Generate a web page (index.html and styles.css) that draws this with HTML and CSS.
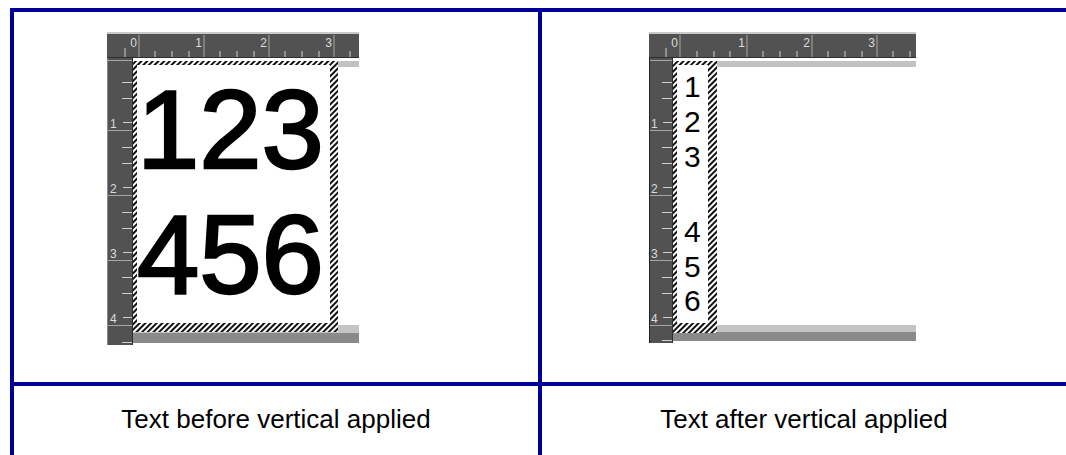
FILE: index.html
```html
<!DOCTYPE html>
<html lang="en">
<head>
    <meta charset="UTF-8">
    <title>Vertical Text</title>
    <link rel="stylesheet" href="styles.css">
</head>
<body>
    <div class="sheet">
        <div class="cell pic before">
            <svg class="shot" width="252" height="313" viewBox="0 0 252 313">
                <defs>
                    <pattern id="hatch-a" width="4" height="4" patternUnits="userSpaceOnUse" patternTransform="rotate(45)">
                        <rect width="4" height="4" fill="#fff"/>
                        <rect width="2" height="4" fill="#111"/>
                    </pattern>
                </defs>
                <rect width="252" height="313" fill="#fff"/>
                <rect x="26" y="29" width="226" height="6" fill="#c2c2c2"/>
                <rect x="26" y="293" width="226" height="8" fill="#c4c4c4"/>
                <rect x="26" y="301" width="226" height="10" fill="#8a8a8a"/>
                <!-- label -->
                <rect x="26" y="29" width="205" height="271" fill="url(#hatch-a)"/>
                <rect x="30" y="33" width="193" height="258" fill="#fff"/>
                <g class="digits big" font-size="112">
                    <text x="30" y="136">123</text>
                    <text x="30" y="261">456</text>
                </g>
                <!-- top ruler -->
                <rect width="252" height="26" fill="#525252"/>
                <rect width="252" height="2" fill="#cacaca"/>
                <rect y="25" width="252" height="1" fill="#2e2e2e"/>
                <path d="M32 3V25M97 3V25M162 3V25M227 3V25" stroke="#a6a6a6"/>
                <path d="M18 16V25M48 19V25M65 19V25M82 19V25M113 19V25M130 19V25M147 19V25M178 19V25M195 19V25M212 19V25M243 19V25" stroke="#cfcfcf"/>
                <g class="ruler-num" text-anchor="end">
                    <text x="30" y="15">0</text>
                    <text x="95" y="15">1</text>
                    <text x="160" y="15">2</text>
                    <text x="225" y="15">3</text>
                </g>
                <!-- left ruler -->
                <rect y="26" width="26" height="287" fill="#525252"/>
                <rect x="0" y="26" width="1" height="287" fill="#8a8a8a"/>
                <rect x="25" y="26" width="1" height="287" fill="#2e2e2e"/>
                <path d="M1 28.5H25M1 98.5H25M1 163.5H25M1 228.5H25M1 293.5H25" stroke="#a6a6a6"/>
                <path d="M15 50.5H25M15 66.5H25M16 90.5H25M15 115.5H25M15 131.5H25M16 155.5H25M15 180.5H25M15 196.5H25M16 220.5H25M15 245.5H25M15 261.5H25M16 285.5H25M15 310.5H25" stroke="#cfcfcf"/>
                <g class="ruler-num">
                    <text x="3" y="96">1</text>
                    <text x="3" y="161">2</text>
                    <text x="3" y="226">3</text>
                    <text x="3" y="291">4</text>
                </g>
            </svg>
        </div>
        <div class="cell pic after">
            <svg class="shot" width="267" height="311" viewBox="0 0 267 311">
                <defs>
                    <pattern id="hatch-b" width="4" height="4" patternUnits="userSpaceOnUse" patternTransform="rotate(45)">
                        <rect width="4" height="4" fill="#fff"/>
                        <rect width="2" height="4" fill="#111"/>
                    </pattern>
                </defs>
                <rect width="267" height="311" fill="#fff"/>
                <rect x="24" y="29" width="243" height="6" fill="#c2c2c2"/>
                <rect x="24" y="293" width="243" height="7" fill="#c4c4c4"/>
                <rect x="24" y="300" width="243" height="9" fill="#8a8a8a"/>
                <!-- label -->
                <rect x="24" y="29" width="44" height="272" fill="url(#hatch-b)"/>
                <rect x="28" y="33" width="31" height="258" fill="#fff"/>
                <g class="digits small" font-size="30">
                    <text x="35" y="65">1</text>
                    <text x="35" y="100">2</text>
                    <text x="35" y="135">3</text>
                    <text x="35" y="210">4</text>
                    <text x="35" y="245">5</text>
                    <text x="35" y="279">6</text>
                </g>
                <!-- top ruler -->
                <rect width="267" height="26" fill="#525252"/>
                <rect width="267" height="2" fill="#cacaca"/>
                <rect y="25" width="267" height="1" fill="#2e2e2e"/>
                <path d="M31 3V25M98 3V25M163 3V25M228 3V25" stroke="#a6a6a6"/>
                <path d="M17 16V25M48 19V25M65 19V25M81 19V25M114 19V25M131 19V25M148 19V25M179 19V25M196 19V25M213 19V25M244 19V25M261 19V25" stroke="#cfcfcf"/>
                <g class="ruler-num" text-anchor="end">
                    <text x="29" y="15">0</text>
                    <text x="96" y="15">1</text>
                    <text x="161" y="15">2</text>
                    <text x="226" y="15">3</text>
                </g>
                <!-- left ruler -->
                <rect y="26" width="24" height="285" fill="#525252"/>
                <rect x="0" y="26" width="1" height="285" fill="#222"/>
                <rect x="23" y="26" width="1" height="285" fill="#2e2e2e"/>
                <path d="M1 28.5H23M1 98.5H23M1 163.5H23M1 228.5H23M1 293.5H23" stroke="#a6a6a6"/>
                <path d="M13 50.5H23M13 66.5H23M14 90.5H23M13 115.5H23M13 131.5H23M14 155.5H23M13 180.5H23M13 196.5H23M14 220.5H23M13 245.5H23M13 261.5H23M14 285.5H23M13 308.5H23" stroke="#cfcfcf"/>
                <g class="ruler-num">
                    <text x="2" y="96">1</text>
                    <text x="2" y="161">2</text>
                    <text x="2" y="226">3</text>
                    <text x="2" y="291">4</text>
                </g>
            </svg>
        </div>
        <div class="cell caption">Text before vertical applied</div>
        <div class="cell caption">Text after vertical applied</div>
    </div>
</body>
</html>
```

FILE: styles.css
```css
body {
    margin: 0;
    font-family: "Liberation Sans", Arial, sans-serif;
    background: #fff;
    overflow: hidden;
}
.sheet {
    margin: 8px 0 0 10px;
    display: grid;
    grid-template-columns: 528px 528px;
    border-top: 4px solid #000096;
    border-left: 4px solid #000096;
}
.cell {
    box-sizing: border-box;
    border-right: 4px solid #000096;
    border-bottom: 4px solid #000096;
}
.pic {
    height: 374px;
    padding-top: 20px;
}
.pic.before {
    padding-left: 93px;
}
.pic.after {
    padding-left: 107px;
}
.shot {
    display: block;
}
.digits {
    font-family: "Liberation Sans", Arial, sans-serif;
    fill: #000;
}
.digits.big {
    stroke: #000;
    stroke-width: 2.5px;
}
.ruler-num {
    font-family: "Liberation Sans", Arial, sans-serif;
    font-size: 12px;
    fill: #dcdcdc;
}
.caption {
    height: 90px;
    padding-top: 18px;
    text-align: center;
    font-size: 26px;
    line-height: 30px;
    color: #000;
}
```
